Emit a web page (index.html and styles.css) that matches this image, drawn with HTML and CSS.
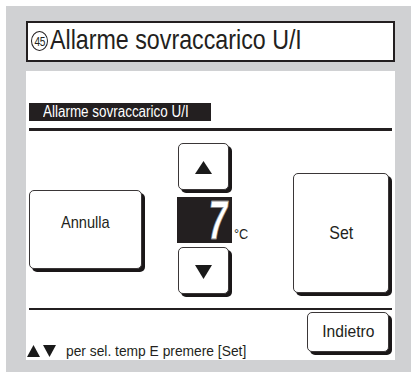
FILE: index.html
```html
<!DOCTYPE html>
<html>
<head>
<meta charset="utf-8">
<link rel="stylesheet" href="styles.css">
</head>
<body>
<div class="frame">
  <div class="title">
    <span class="circ"><span class="circ-num">45</span></span>
    <span class="title-text">Allarme sovraccarico U/I</span>
  </div>
  <div class="panel">
    <div class="label"><span class="label-text">Allarme sovraccarico U/I</span></div>
    <div class="rule thick"></div>
    <div class="middle">
      <div class="btn annulla"><span class="btxt">Annulla</span></div>
      <div class="stepper">
        <div class="btn step up">
          <svg width="17" height="13" viewBox="0 0 17 13"><polygon points="8.5,0 17,13 0,13" fill="#1a1a1a"/></svg>
        </div>
        <div class="unit-spacer"></div>
        <div class="digit"><span class="digit-num">7</span></div>
        <div class="unit"><span class="unit-txt">°C</span></div>
        <div class="btn step down">
          <svg width="17" height="14" viewBox="0 0 17 14"><polygon points="0,0 17,0 8.5,14" fill="#1a1a1a"/></svg>
        </div>
      </div>
      <div class="btn set"><span class="btxt big">Set</span></div>
    </div>
    <div class="rule thin"></div>
    <div class="footer">
      <div class="help">
        <svg class="tri" width="13" height="12" viewBox="0 0 13 12"><polygon points="6.5,0 13,12 0,12" fill="#1a1a1a"/></svg>
        <svg class="tri" width="13" height="12" viewBox="0 0 13 12"><polygon points="0,0 13,0 6.5,12" fill="#1a1a1a"/></svg>
        <span class="help-text">per sel. temp E premere [Set]</span>
      </div>
      <div class="btn back"><span class="btxt">Indietro</span></div>
    </div>
  </div>
</div>
</body>
</html>
```

FILE: styles.css
```css
html, body {
  margin: 0;
  padding: 0;
  background: #ffffff;
}
body {
  width: 411px;
  height: 372px;
  overflow: hidden;
  font-family: "Liberation Sans", Arial, sans-serif;
  color: #231f20;
}
.frame {
  margin: 6px 0 0 6px;
  width: 405px;
  height: 366px;
  box-sizing: border-box;
  background: #d0d1d3;
  padding: 15px 16px 0 20px;
}
.title {
  height: 41px;
  box-sizing: border-box;
  border: 2px solid #231f20;
  background: #fff;
  display: flex;
  align-items: center;
  padding: 0 0 3px 3px;
}
.circ {
  width: 17px;
  height: 20px;
  box-sizing: border-box;
  border: 1.3px solid #231f20;
  border-radius: 50%;
  display: flex;
  align-items: center;
  justify-content: center;
  margin-top: 2px;
}
.circ-num {
  font-size: 13px;
  display: inline-block;
  transform: scaleX(0.78);
  letter-spacing: -0.5px;
}
.title-text {
  font-size: 28px;
  display: inline-block;
  transform: scaleX(0.83);
  transform-origin: left center;
  margin-left: 2px;
  white-space: nowrap;
}
.panel {
  margin-top: 9px;
  height: 289px;
  background: #fff;
  box-sizing: border-box;
  padding: 32px 3px 0 3px;
  display: flex;
  flex-direction: column;
}
.label {
  width: 182px;
  height: 18px;
  background: #231f20;
  color: #fff;
  display: flex;
  align-items: center;
  padding-left: 14px;
  box-sizing: border-box;
}
.label-text {
  font-size: 16px;
  display: inline-block;
  transform: scaleX(0.84);
  transform-origin: left center;
  white-space: nowrap;
}
.rule {
  background: #231f20;
}
.rule.thick {
  height: 3px;
  margin-top: 7px;
}
.rule.thin {
  height: 2px;
}
.middle {
  height: 177px;
  display: flex;
  align-items: flex-start;
}
.btn {
  box-sizing: border-box;
  border: 1px solid #3a3637;
  border-radius: 5px;
  box-shadow: 3px 3px 0 #1a1718;
  background: #fff;
  display: flex;
  align-items: center;
  justify-content: center;
}
.btxt {
  font-size: 17px;
  display: inline-block;
  transform: scaleX(0.86);
  white-space: nowrap;
}
.btxt.big {
  font-size: 19px;
  transform: scaleX(0.84);
}
.annulla {
  width: 113px;
  height: 79px;
  margin-top: 59px;
  padding-bottom: 14px;
}
.stepper {
  margin-top: 12px;
  margin-left: 35px;
  display: grid;
  grid-template-columns: 55px 20px;
}
.step {
  width: 51px;
  height: 47px;
  margin-left: 1px;
}
.step.up svg {
  margin-top: 2px;
}
.step.down {
  margin-top: 4px;
}
.step.down svg {
  margin-top: 2px;
}
.unit-spacer {
  width: 20px;
}
.digit {
  margin-top: 7px;
  height: 46px;
  background: #231f20;
  display: flex;
  justify-content: flex-end;
  padding-right: 5px;
  box-sizing: border-box;
}
.digit-num {
  font-size: 56px;
  line-height: 46px;
  font-weight: bold;
  font-style: italic;
  color: #fff;
  display: inline-block;
  transform: scaleX(0.6);
  transform-origin: right center;
  -webkit-text-stroke: 0.8px #8c8a8b;
}
.unit {
  align-self: end;
  padding-left: 2px;
}
.unit-txt {
  font-size: 15px;
  line-height: 16px;
  display: inline-block;
  transform: scaleX(0.85);
  transform-origin: left center;
}
.set {
  width: 96px;
  height: 120px;
  margin-top: 42px;
  margin-left: auto;
  margin-right: 3px;
}
.footer {
  flex: 1;
  display: flex;
  justify-content: space-between;
  align-items: flex-end;
}
.help {
  display: flex;
  align-items: center;
  padding-bottom: 1px;
  margin-left: -2px;
}
.tri {
  margin-right: 3px;
}
.help-text {
  margin-left: 7px;
  font-size: 15px;
  line-height: 16px;
  display: inline-block;
  transform: scaleX(0.92);
  transform-origin: left center;
  white-space: nowrap;
}
.back {
  align-self: flex-start;
  margin-top: 2px;
  margin-right: 3px;
  width: 82px;
  height: 40px;
}
.back .btxt {
  transform: scaleX(0.92);
}
```
